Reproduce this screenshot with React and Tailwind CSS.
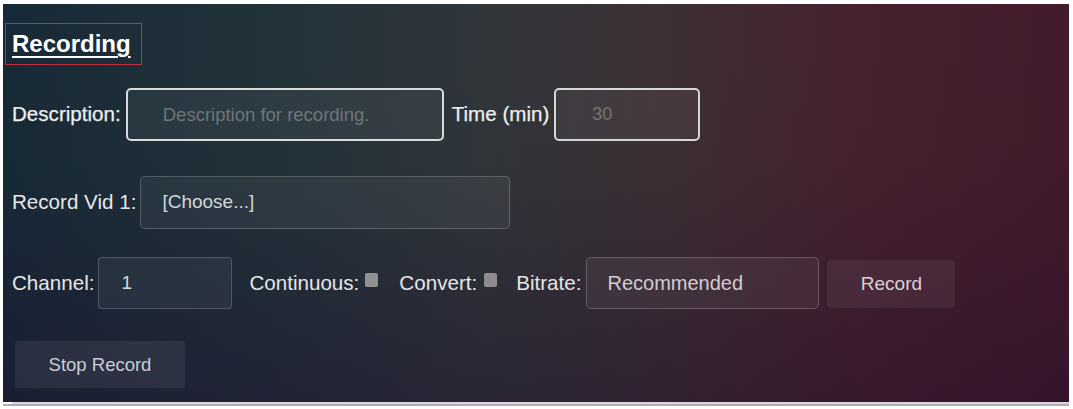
import { useState } from 'react';

const font = { fontFamily: '"Liberation Sans", Arial, sans-serif' };

export default function App() {
  const [desc, setDesc] = useState('');
  const [time, setTime] = useState('');
  const [channel, setChannel] = useState('1');
  const [bitrate, setBitrate] = useState('Recommended');
  const [continuous, setContinuous] = useState(false);
  const [convert, setConvert] = useState(false);

  return (
    <div className="w-[1073px] h-[409px] bg-white pt-[4px] pl-[3px] overflow-hidden" style={font}>
      {/* Panel */}
      <div className="w-[1066px] h-[398px] pt-[19px] bg-[linear-gradient(to_bottom,rgba(0,0,0,0)_0%,rgba(0,0,0,0.02)_40%,rgba(28,8,44,0.35)_100%),linear-gradient(to_right,#182a37_0%,#22323a_25%,#30363a_45%,#3d2f35_62%,#46222f_80%,#421b2c_100%)]">
        <div className="ml-[2px] w-[137px] h-[42px] border border-[#c0313e] flex items-center pl-[6px]">
          <h2 className="text-[24px] font-bold text-white underline decoration-2 underline-offset-[4px] leading-none">Recording</h2>
        </div>

        <div className="pl-[9px]">
          {/* Row 1 */}
          <div className="mt-[23px] h-[53px] flex items-center text-[20.6px] text-[#eceeee] [-webkit-text-stroke:0.25px_#eceeee]">
            <label className="mr-[5px]">Description:</label>
            <input
              className="w-[318px] h-[53px] rounded-[5px] border-2 border-[#d7dbdb] bg-white/[0.05] pl-[35px] text-[18.5px] text-[#c8cccc] placeholder:text-[#6e7677] outline-none [-webkit-text-stroke:0]"
              placeholder="Description for recording."
              value={desc}
              onChange={(e) => setDesc(e.target.value)}
            />
            <label className="ml-[8px] mr-[5px]">Time (min)</label>
            <input
              className="w-[146px] h-[53px] rounded-[5px] border-2 border-[#d7d7d6] bg-white/[0.05] pl-[36px] text-[18px] text-[#c8cccc] placeholder:text-[#767473] outline-none [-webkit-text-stroke:0]"
              placeholder="30"
              value={time}
              onChange={(e) => setTime(e.target.value)}
            />
          </div>

          {/* Row 2 */}
          <div className="mt-[35px] h-[53px] flex items-center text-[20.6px] text-[#e6e8e8]">
            <label className="mr-[4px]">Record Vid 1:</label>
            <select className="appearance-none w-[370px] h-[53px] rounded-[5px] border border-white/[0.2] bg-white/[0.05] pl-[21px] text-[19px] text-[#d3d6d6] outline-none">
              <option className="text-black">[Choose...]</option>
            </select>
          </div>

          {/* Row 3 */}
          <div className="mt-[28px] h-[52px] flex items-center text-[20.6px] text-[#e6e6e6]">
            <label className="mr-[4px]">Channel:</label>
            <input
              className="w-[134px] h-[52px] rounded-[4px] border border-white/[0.18] bg-white/[0.05] pl-[22px] text-[19px] text-[#d6d8d8] outline-none"
              value={channel}
              onChange={(e) => setChannel(e.target.value)}
            />
            <label className="ml-[17px] mr-[6px]">Continuous:</label>
            <input
              type="checkbox"
              checked={continuous}
              onChange={() => setContinuous(!continuous)}
              className="appearance-none w-[13px] h-[14px] mb-[6px] rounded-[2px] bg-[#8e918f] checked:bg-[#c9cbc9]"
            />
            <label className="ml-[21px] mr-[7px]">Convert:</label>
            <input
              type="checkbox"
              checked={convert}
              onChange={() => setConvert(!convert)}
              className="appearance-none w-[13px] h-[14px] mb-[6px] rounded-[2px] bg-[#8e8c8c] checked:bg-[#c9c7c7]"
            />
            <label className="ml-[19px] mr-[5px]">Bitrate:</label>
            <input
              className="w-[233px] h-[52px] rounded-[5px] border border-white/[0.2] bg-white/[0.05] pl-[20px] text-[20px] text-[#d2cbcf] outline-none"
              value={bitrate}
              onChange={(e) => setBitrate(e.target.value)}
            />
            <button className="ml-[7px] w-[130px] h-[50px] mt-[2px] rounded-[5px] border border-black/[0.25] bg-white/[0.06] text-[19px] text-[#d9d1d7]">
              Record
            </button>
          </div>

          {/* Row 4 */}
          <div className="mt-[31px]">
            <button className="ml-[2px] w-[172px] h-[49px] rounded-[4px] border border-black/[0.25] bg-white/[0.07] text-[18.5px] text-[#c9cdd5]">
              Stop Record
            </button>
          </div>
        </div>
      </div>
      <div className="ml-[9px] w-[1057px] h-[2px] bg-[#dcd6dc]" />
      <div className="w-[1066px] h-[2px] bg-[#b2adb2]" />
    </div>
  );
}
